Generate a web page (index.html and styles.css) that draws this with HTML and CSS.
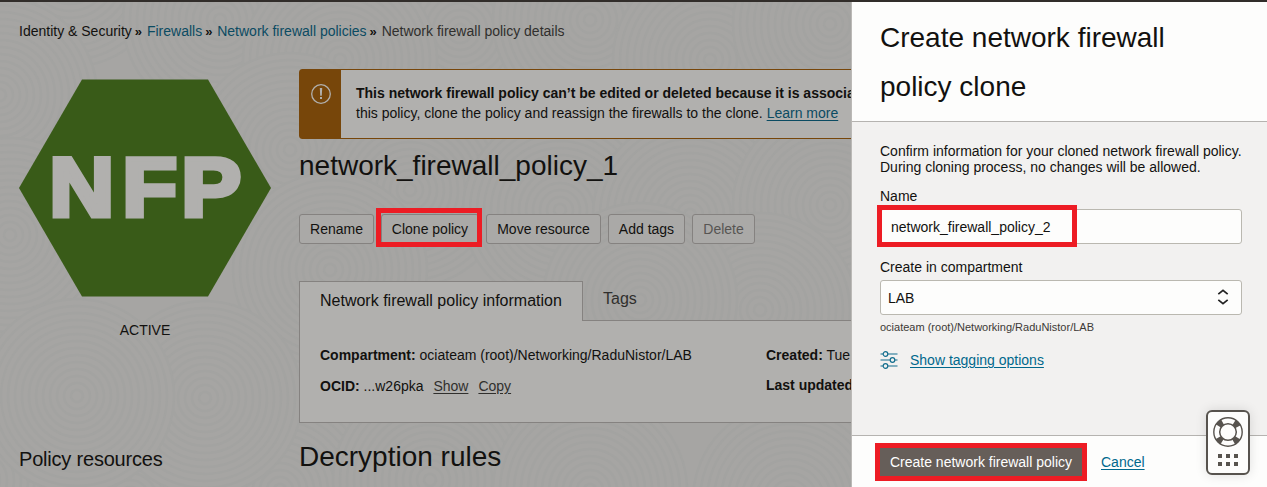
FILE: index.html
```html
<!DOCTYPE html>
<html lang="en">
<head>
<meta charset="utf-8">
<title>Network firewall policy details</title>
<link rel="stylesheet" href="styles.css">
</head>
<body>
<div class="app">
  <main class="page">
    <svg class="texture" width="851" height="485" viewBox="0 2 851 485">
      <defs>
        <g id="disc" fill="none" stroke="#a3a3a1" stroke-width="2.500">
          <circle r="97" fill="#a6a5a3"/><circle r="90"/><circle r="83"/><circle r="76"/><circle r="69"/><circle r="62"/><circle r="55"/><circle r="48"/><circle r="41"/><circle r="34"/><circle r="27"/><circle r="20"/><circle r="13"/><circle r="6"/>
        </g>
      </defs>
      <use href="#disc" x="70" y="-30"/><use href="#disc" x="220" y="20"/><use href="#disc" x="460" y="30"/><use href="#disc" x="590" y="20"/><use href="#disc" x="340" y="60"/><use href="#disc" x="710" y="60"/><use href="#disc" x="830" y="24"/>
      <use href="#disc" x="0" y="95"/><use href="#disc" x="290" y="150"/><use href="#disc" x="10" y="235"/><use href="#disc" x="410" y="190"/><use href="#disc" x="560" y="210"/><use href="#disc" x="690" y="215"/><use href="#disc" x="830" y="205"/>
      <use href="#disc" x="330" y="270"/><use href="#disc" x="760" y="310"/><use href="#disc" x="640" y="300"/><use href="#disc" x="-20" y="480"/><use href="#disc" x="280" y="490"/><use href="#disc" x="130" y="500"/><use href="#disc" x="430" y="480"/><use href="#disc" x="590" y="490"/><use href="#disc" x="790" y="500"/>
      <use href="#disc" x="205" y="398"/><use href="#disc" x="77" y="396"/>
    </svg>
    <nav class="crumbs">
      <span class="crumb-first">Identity &amp; Security</span><b>»</b><a>Firewalls</a><b>»</b><a>Network firewall policies</a><b>»</b><span class="crumb-last">Network firewall policy details</span>
    </nav>
    <div class="columns">
      <aside class="side">
        <svg class="hex" width="252" height="218" viewBox="0 0 252 218">
          <path d="M63 .5H189L252 109 189 217.500H63L0 109Z" fill="#395b18"/>
          <text transform="scale(1.07 1)" x="28.300 96.500 151.600" y="137.500">NFP</text>
        </svg>
        <div class="state">ACTIVE</div>
        <h3 class="resources">Policy resources</h3>
      </aside>
      <section class="detail">
        <div class="banner">
          <div class="banner-icon">
            <svg width="22" height="22" viewBox="0 0 22 22"><circle cx="11" cy="11" r="9.300" fill="none" stroke="#b1b0ae" stroke-width="1.300"/><path d="M9.800 5h2.400l-.4 7.800h-1.600zM10 14h2v2h-2z" fill="#b1b0ae"/></svg>
          </div>
          <p class="banner-text"><b>This network firewall policy can’t be edited or deleted because it is associated</b><br>this policy, clone the policy and reassign the firewalls to the clone. <a>Learn more</a></p>
        </div>
        <h1 class="title">network_firewall_policy_1</h1>
        <div class="actions">
          <button class="btn rename">Rename</button>
          <button class="btn clone marked">Clone policy</button>
          <button class="btn move">Move resource</button>
          <button class="btn tags">Add tags</button>
          <button class="btn delete">Delete</button>
        </div>
        <div class="tabs">
          <div class="tab active">Network firewall policy information</div>
          <div class="tab other">Tags</div>
        </div>
        <div class="info">
          <div class="info-col">
            <div><b>Compartment:</b> ociateam (root)/Networking/RaduNistor/LAB</div>
            <div><b>OCID:</b> ...w26pka <a class="show">Show</a><a>Copy</a></div>
          </div>
          <div class="info-col dates">
            <div><b>Created:</b> Tue</div>
            <div><b>Last updated</b></div>
          </div>
        </div>
        <h2 class="rules">Decryption rules</h2>
      </section>
    </div>
  </main>
  <section class="panel">
    <header class="panel-head"><h2>Create network firewall<br>policy clone</h2></header>
    <div class="panel-body">
      <p class="intro">Confirm information for your cloned network firewall policy.<br>During cloning process, no changes will be allowed.</p>
      <div class="label name-label">Name</div>
      <div class="field name-field"><span>network_firewall_policy_2</span></div>
      <div class="label comp-label">Create in compartment</div>
      <div class="field select"><span>LAB</span>
        <svg width="12" height="16" viewBox="0 0 12 16" fill="none" stroke="#222" stroke-width="1.700"><path d="M1.300 5.200 6 1.400l4.700 3.800M1.300 10.800 6 14.600l4.700-3.800"/></svg>
      </div>
      <div class="path">ociateam (root)/Networking/RaduNistor/LAB</div>
      <div class="tagging">
        <svg width="18" height="18" viewBox="0 0 18 18" fill="none" stroke="#136e8e" stroke-width="1.200"><path d="M.5 3H3M8 3h9.500M.5 9H10M15 9h2.500M.5 15H3M8 15h9.500"/><circle cx="5.500" cy="3" r="2.300"/><circle cx="12.500" cy="9" r="2.300"/><circle cx="5.500" cy="15" r="2.300"/></svg>
        <a>Show tagging options</a>
      </div>
    </div>
    <footer class="panel-foot">
      <button class="primary">Create network firewall policy</button>
      <a>Cancel</a>
    </footer>
    <div class="help">
      <svg width="30" height="52" viewBox="0 0 30 52">
        <circle cx="15" cy="15" r="11.200" fill="none" stroke="#57534e" stroke-width="6.500" stroke-dasharray="5.600 11.993" stroke-dashoffset="-6"/>
        <circle cx="15" cy="15" r="14.200" fill="none" stroke="#57534e" stroke-width="1.400"/>
        <circle cx="15" cy="15" r="8.300" fill="#fdfdfc" stroke="#57534e" stroke-width="1.500"/>
        <path d="M5 37h4v4H5zM13 37h4v4h-4zM21 37h4v4h-4zM5 45h4v4H5zM13 45h4v4h-4zM21 45h4v4h-4z" fill="#57534e"/>
      </svg>
    </div>
  </section>
</div>
</body>
</html>
```
FILE: styles.css
```css
*, *::before, *::after { box-sizing: border-box; }
body { margin: 0; font-family: "Liberation Sans", Arial, sans-serif; font-size: 14px; color: #12110f; overflow: hidden; }
h1, h2, h3, p { margin: 0; font-weight: 400; }
a { text-decoration: underline; text-underline-offset: 2px; }
button { font: inherit; padding: 0; white-space: nowrap; }
.app { display: flex; width: 1267px; height: 487px; border-top: 2px solid #312d2a; position: relative; }
.page { position: relative; isolation: isolate; width: 851px; height: 485px; overflow: hidden; flex: none; padding-left: 19px; background: #a6a5a3; }
.texture { position: absolute; inset: 0; z-index: -1; }
.crumbs { height: 67px; padding-top: 20px; line-height: 18px; white-space: nowrap; }
.crumbs a { color: #0b4b62; text-decoration: none; }
.crumbs b { font-size: 13px; margin: 0 4.850px 0 3px; }
.crumb-last { color: #302f2d; }
.columns { display: flex; }
.side { width: 280px; flex: none; padding-top: 10px; }
.hex { display: block; }
.hex text { font: 700 84px "Liberation Sans", Arial, sans-serif; fill: #b1b0ae; stroke: #b1b0ae; stroke-width: 5px; }
.state { width: 252px; text-align: center; line-height: 18px; margin-top: 24px; }
.resources { font-size: 20px; line-height: 24px; margin-top: 108px; letter-spacing: -.2px; }
.detail { width: 900px; flex: none; }
.banner { display: flex; height: 70px; border: 1px solid #77460a; border-radius: 3px; background: #b1b0ae; }
.banner-icon { width: 41px; background: #77460a; padding: 13px 0 0 10px; }
.banner-text { padding: 13px 0 0 15px; line-height: 20px; white-space: nowrap; }
.banner a { color: #0b4b62; }
.title { font-size: 28px; line-height: 32px; margin-top: 11px; }
.actions { display: flex; gap: 7px; margin-top: 32px; }
.btn { height: 30px; border: 1px solid #858280; border-radius: 3px; background: #aaa9a7; color: #12110f; }
.rename { width: 75px; }
.clone { width: 98px; }
.move { width: 115px; }
.tags { width: 77px; }
.delete { width: 63px; color: #575553; }
.marked, .name-field, .primary { position: relative; }
.marked::after, .name-field::after, .primary::after { content: ""; position: absolute; border: 5px solid #ed1c24; }
.marked::after { left: -6px; top: -7px; width: 106px; height: 39px; }
.tabs { display: flex; height: 40px; margin-top: 37px; font-size: 16px; border-bottom: 1px solid #858280; }
.tab.active { width: 284px; height: 40px; padding-left: 20px; line-height: 37px; border: 1px solid #858280; border-bottom: 0; background: #b1b0ae; }
.tab.other { padding-left: 20px; line-height: 36px; color: #302f2d; }
.info { display: flex; height: 102px; border: 1px solid #858280; border-top: 0; background: #b1b0ae; padding: 25px 0 0 20px; }
.info-col { display: grid; flex: none; grid-template-rows: 31px 31px; width: 446px; line-height: 18px; }
.dates { grid-template-rows: 30px 30px; }
.info a { color: #302f2d; }
.show { margin: 0 10px 0 6px; }
.rules { font-size: 28px; line-height: 32px; margin-top: 18px; }

.panel { width: 416px; flex: none; display: flex; flex-direction: column; border-left: 1px solid #bbb9b6; background: #f2f1f0; }
.panel-head { height: 120px; padding: 11px 0 0 28px; background: #fdfdfc; border-bottom: 1px solid #b5b3b0; }
.panel-head h2 { font-size: 28px; line-height: 49px; }
.panel-body { height: 313px; padding: 21px 25px 0 28px; }
.intro { line-height: 16px; white-space: nowrap; }
.label { line-height: 18px; }
.name-label { margin-top: 12px; }
.field { height: 35px; border: 1px solid #bab8b0; border-radius: 3px; background: #fdfdfc; display: flex; align-items: center; justify-content: space-between; }
.name-field { padding-left: 10px; margin-top: 4px; }
.name-field::after { left: -4px; top: -5px; width: 200px; height: 42px; }
.comp-label { margin-top: 14px; }
.select { padding: 0 12px 0 7px; margin-top: 4px; }
.select svg { margin-bottom: 1px; }
.path { font-size: 11px; line-height: 14px; margin-top: 5px; color: #3c3936; }
.tagging { display: flex; align-items: center; margin-top: 17px; height: 18px; gap: 12px; }
.tagging a, .panel-foot a { color: #00688c; }
.panel-foot { height: 52px; background: #fdfdfc; border-top: 1px solid #b5b3b0; display: flex; align-items: center; gap: 19px; padding: 0 0 0 28px; }
.primary { width: 202px; height: 28px; border: 0; background: #665e59; color: #fff; }
.primary::after { left: -5px; top: -5px; width: 212px; height: 38px; }
.help { position: absolute; left: 1206px; top: 408px; width: 44px; height: 65px; border: 2px solid #57534e; border-radius: 6px; background: #fdfdfc; box-shadow: 0 0 12px rgba(0,0,0,.12); padding: 5px; }
.help svg { display: block; }
```
